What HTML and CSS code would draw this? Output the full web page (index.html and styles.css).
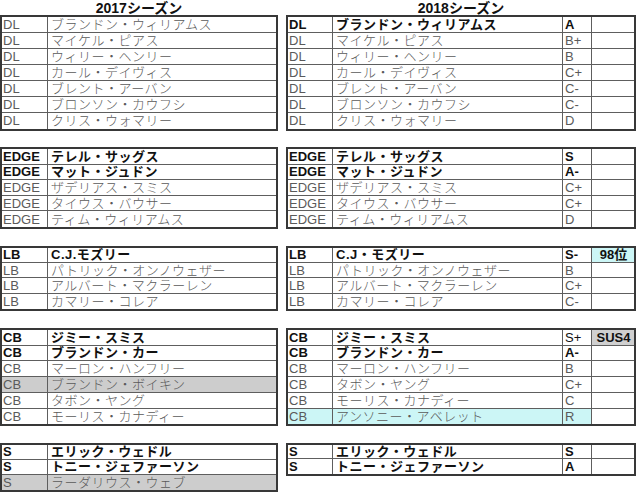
FILE: index.html
```html
<!DOCTYPE html>
<html lang="ja">
<head>
<meta charset="utf-8">
<link rel="stylesheet" href="styles.css">
</head>
<body>
<div class="sheet">
  <div class="title col-l">2017シーズン</div>
  <div class="title col-r">2018シーズン</div>

  <div class="tbl left col-l g-dl">
    <div class="row"><div class="c pos">DL</div><div class="c name">ブランドン・ウィリアムス</div></div>
    <div class="row"><div class="c pos">DL</div><div class="c name">マイケル・ピアス</div></div>
    <div class="row"><div class="c pos">DL</div><div class="c name">ウィリー・ヘンリー</div></div>
    <div class="row"><div class="c pos">DL</div><div class="c name">カール・デイヴィス</div></div>
    <div class="row"><div class="c pos">DL</div><div class="c name">ブレント・アーバン</div></div>
    <div class="row"><div class="c pos">DL</div><div class="c name">ブロンソン・カウフシ</div></div>
    <div class="row"><div class="c pos">DL</div><div class="c name">クリス・ウォマリー</div></div>
  </div>
  <div class="tbl right col-r g-dl">
    <div class="row b"><div class="c pos">DL</div><div class="c name">ブランドン・ウィリアムス</div><div class="c grade">A</div><div class="c note"></div></div>
    <div class="row"><div class="c pos">DL</div><div class="c name">マイケル・ピアス</div><div class="c grade">B+</div><div class="c note"></div></div>
    <div class="row"><div class="c pos">DL</div><div class="c name">ウィリー・ヘンリー</div><div class="c grade">B</div><div class="c note"></div></div>
    <div class="row"><div class="c pos">DL</div><div class="c name">カール・デイヴィス</div><div class="c grade">C+</div><div class="c note"></div></div>
    <div class="row"><div class="c pos">DL</div><div class="c name">ブレント・アーバン</div><div class="c grade">C-</div><div class="c note"></div></div>
    <div class="row"><div class="c pos">DL</div><div class="c name">ブロンソン・カウフシ</div><div class="c grade">C-</div><div class="c note"></div></div>
    <div class="row"><div class="c pos">DL</div><div class="c name">クリス・ウォマリー</div><div class="c grade">D</div><div class="c note"></div></div>
  </div>

  <div class="tbl left col-l g-edge">
    <div class="row b"><div class="c pos">EDGE</div><div class="c name">テレル・サッグス</div></div>
    <div class="row b"><div class="c pos">EDGE</div><div class="c name">マット・ジュドン</div></div>
    <div class="row"><div class="c pos">EDGE</div><div class="c name">ザデリアス・スミス</div></div>
    <div class="row"><div class="c pos">EDGE</div><div class="c name">タイウス・バウサー</div></div>
    <div class="row"><div class="c pos">EDGE</div><div class="c name">ティム・ウィリアムス</div></div>
  </div>
  <div class="tbl right col-r g-edge">
    <div class="row b"><div class="c pos">EDGE</div><div class="c name">テレル・サッグス</div><div class="c grade">S</div><div class="c note"></div></div>
    <div class="row b"><div class="c pos">EDGE</div><div class="c name">マット・ジュドン</div><div class="c grade">A-</div><div class="c note"></div></div>
    <div class="row"><div class="c pos">EDGE</div><div class="c name">ザデリアス・スミス</div><div class="c grade">C+</div><div class="c note"></div></div>
    <div class="row"><div class="c pos">EDGE</div><div class="c name">タイウス・バウサー</div><div class="c grade">C+</div><div class="c note"></div></div>
    <div class="row"><div class="c pos">EDGE</div><div class="c name">ティム・ウィリアムス</div><div class="c grade">D</div><div class="c note"></div></div>
  </div>

  <div class="tbl left col-l g-lb">
    <div class="row b"><div class="c pos">LB</div><div class="c name">C.J.モズリー</div></div>
    <div class="row"><div class="c pos">LB</div><div class="c name">パトリック・オンノウェザー</div></div>
    <div class="row"><div class="c pos">LB</div><div class="c name">アルバート・マクラーレン</div></div>
    <div class="row"><div class="c pos">LB</div><div class="c name">カマリー・コレア</div></div>
  </div>
  <div class="tbl right col-r g-lb">
    <div class="row b"><div class="c pos">LB</div><div class="c name">C.J・モズリー</div><div class="c grade">S-</div><div class="c note cyan">98位</div></div>
    <div class="row"><div class="c pos">LB</div><div class="c name">パトリック・オンノウェザー</div><div class="c grade">B</div><div class="c note"></div></div>
    <div class="row"><div class="c pos">LB</div><div class="c name">アルバート・マクラーレン</div><div class="c grade">C+</div><div class="c note"></div></div>
    <div class="row"><div class="c pos">LB</div><div class="c name">カマリー・コレア</div><div class="c grade">C-</div><div class="c note"></div></div>
  </div>

  <div class="tbl left col-l g-cb">
    <div class="row b"><div class="c pos">CB</div><div class="c name">ジミー・スミス</div></div>
    <div class="row b"><div class="c pos">CB</div><div class="c name">ブランドン・カー</div></div>
    <div class="row"><div class="c pos">CB</div><div class="c name">マーロン・ハンフリー</div></div>
    <div class="row gray"><div class="c pos">CB</div><div class="c name">ブランドン・ボイキン</div></div>
    <div class="row"><div class="c pos">CB</div><div class="c name">タボン・ヤング</div></div>
    <div class="row"><div class="c pos">CB</div><div class="c name">モーリス・カナディー</div></div>
  </div>
  <div class="tbl right col-r g-cb">
    <div class="row b"><div class="c pos">CB</div><div class="c name">ジミー・スミス</div><div class="c grade nb">S+</div><div class="c note gray">SUS4</div></div>
    <div class="row b"><div class="c pos">CB</div><div class="c name">ブランドン・カー</div><div class="c grade">A-</div><div class="c note"></div></div>
    <div class="row"><div class="c pos">CB</div><div class="c name">マーロン・ハンフリー</div><div class="c grade">B</div><div class="c note"></div></div>
    <div class="row"><div class="c pos">CB</div><div class="c name">タボン・ヤング</div><div class="c grade">C+</div><div class="c note"></div></div>
    <div class="row"><div class="c pos">CB</div><div class="c name">モーリス・カナディー</div><div class="c grade">C</div><div class="c note"></div></div>
    <div class="row cyanrow"><div class="c pos">CB</div><div class="c name">アンソニー・アベレット</div><div class="c grade">R</div><div class="c note"></div></div>
  </div>

  <div class="tbl left col-l g-s3">
    <div class="row b"><div class="c pos">S</div><div class="c name">エリック・ウェドル</div></div>
    <div class="row b"><div class="c pos">S</div><div class="c name">トニー・ジェファーソン</div></div>
    <div class="row gray"><div class="c pos">S</div><div class="c name">ラーダリウス・ウェブ</div></div>
  </div>
  <div class="tbl right col-r g-s2">
    <div class="row b"><div class="c pos">S</div><div class="c name">エリック・ウェドル</div><div class="c grade">S</div><div class="c note"></div></div>
    <div class="row b"><div class="c pos">S</div><div class="c name">トニー・ジェファーソン</div><div class="c grade">A</div><div class="c note"></div></div>
  </div>
</div>
</body>
</html>
```

FILE: styles.css
```css
html, body {
  margin: 0;
  padding: 0;
  background: #ffffff;
}

.sheet {
  display: grid;
  grid-template-columns: 278px 350px;
  column-gap: 8px;
  grid-template-rows: repeat(30, 16.45px);
  font-family: "Liberation Sans", "Noto Sans CJK JP", sans-serif;
  font-size: 13px;
  color: #5a5a5a;
}

.col-l { grid-column: 1; }
.col-r { grid-column: 2; }

.title {
  grid-row: 1;
  text-align: center;
  font-weight: bold;
  color: #111;
  line-height: 17px;
  font-size: 14px;
}

.g-dl { grid-row: 2 / span 7; }
.g-edge { grid-row: 10 / span 5; }
.g-lb { grid-row: 16 / span 4; }
.g-cb { grid-row: 21 / span 6; }
.g-s3 { grid-row: 28 / span 3; }
.g-s2 { grid-row: 28 / span 2; }

.tbl {
  display: grid;
  grid-auto-rows: 1fr;
  border: 2px solid #383838;
  box-sizing: border-box;
  margin-top: -1px;
  margin-bottom: 1px;
}

.tbl.left { grid-template-columns: 46px 1fr; }
.tbl.right { grid-template-columns: 45px 230px 29px 1fr; }

.row { display: contents; }

.c {
  border-right: 1px solid #5e5e5e;
  border-bottom: 1px solid #5e5e5e;
  display: flex;
  align-items: center;
  padding: 1px 0 0 1px;
  white-space: nowrap;
  overflow: hidden;
  min-width: 0;
  line-height: 14px;
}

.row:last-child .c { border-bottom: 0; }
.c:last-child { border-right: 0; }

.name {
  padding-left: 3px;
  letter-spacing: 0.5px;
  font-weight: 300;
}

.grade { padding-left: 2px; }

.row.b .c {
  font-weight: bold;
  color: #111;
}

.row.b .grade.nb { font-weight: normal; }

.note {
  justify-content: center;
}

.note.cyan {
  background: #ccf6f6;
  font-weight: bold;
  color: #111;
}

.note.gray {
  background: #d0d0d0;
  font-weight: bold;
  color: #111;
}

.row.gray .c { background: #cdcdcd; }
.row.cyanrow .c { background: #ccf6f6; }
.row.cyanrow .c.note { background: #ffffff; }
```
